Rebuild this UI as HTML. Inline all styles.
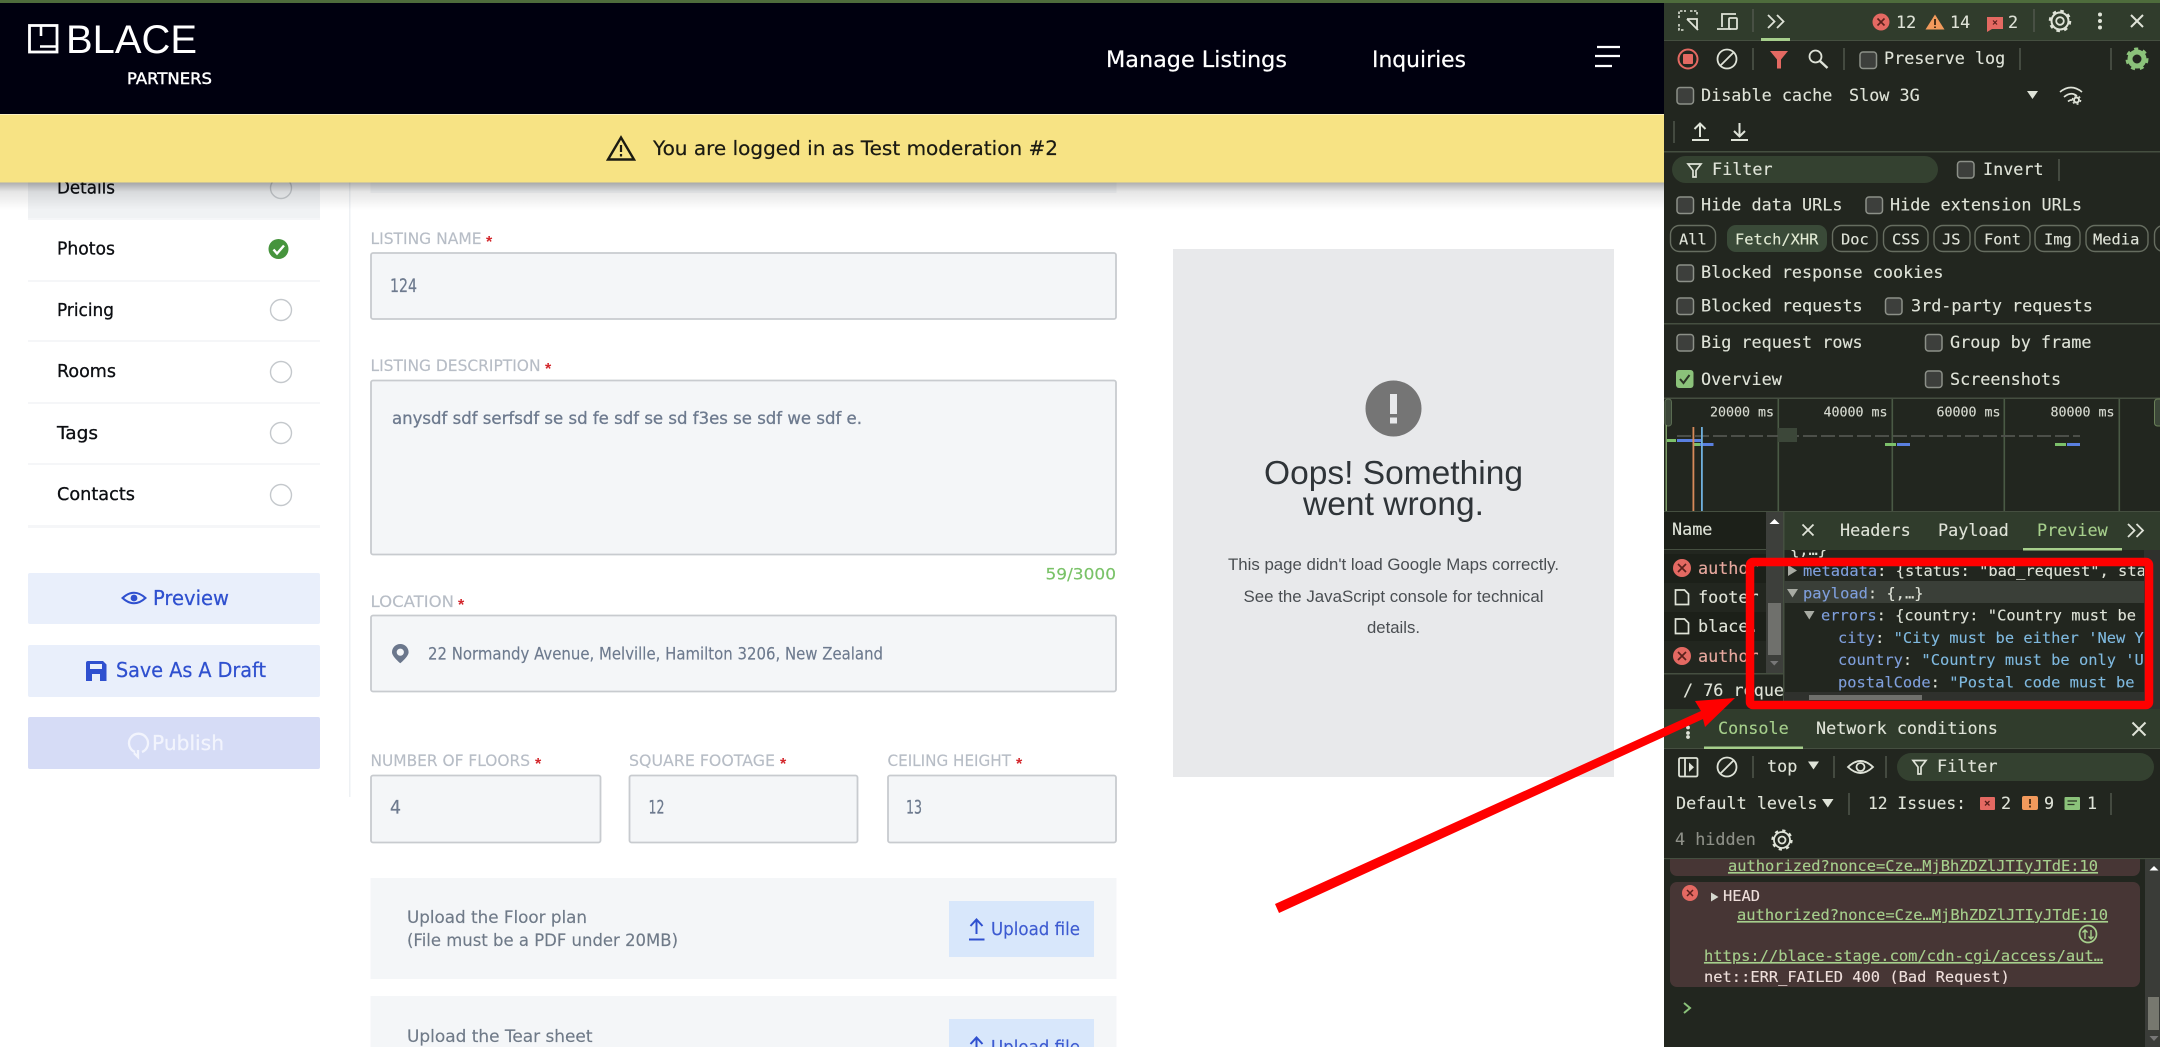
<!DOCTYPE html>
<html lang="en"><head><meta charset="utf-8"><title>BLACE Partners</title>
<style>
html,body{margin:0;padding:0;background:#fff;width:2160px;height:1047px;overflow:hidden}
svg{display:block;filter:blur(.35px)}
.p{font-family:"DejaVu Sans","Liberation Sans",sans-serif}
.a{font-family:"Liberation Sans",Arial,sans-serif}
.lbl{font-size:16px;fill:#b7bdc6;stroke:#b7bdc6;stroke-width:.15}
.val{font-size:19px;fill:#6d7a8e;stroke:#6d7a8e;stroke-width:.25}
.side{font-size:18px;fill:#0c0e12;stroke:#0c0e12;stroke-width:.3}
.star{font-size:16px;fill:#d3262b;font-family:"Liberation Sans",sans-serif;font-weight:bold}
.m{font-family:"DejaVu Sans Mono","Liberation Mono",monospace;font-size:16.8px;fill:#dfe3d8;stroke:#dfe3d8;stroke-width:.12}
.c{font-size:15.4px}
.t{font-size:13.3px;fill:#d5d8cf}
.k{fill:#7f9fdc;stroke:#7f9fdc}.s{fill:#7fb9df;stroke:#7fb9df}
.lk{fill:#a6cf8c;stroke:#a6cf8c;text-decoration:underline;font-size:15.4px}
.ic{fill:none;stroke:#dfe3d8;stroke-width:1.8}
.sep{stroke:#50564c;stroke-width:1.5}
.cb{fill:#3d3f3c;stroke:#8c9088;stroke-width:1.5}
.chip{fill:none;stroke:#666d60;stroke-width:1.4}
</style></head><body>
<svg width="2160" height="1047" viewBox="0 0 2160 1047" xmlns="http://www.w3.org/2000/svg">
<defs>
<linearGradient id="sh" x1="0" y1="0" x2="0" y2="1"><stop offset="0" stop-color="#000" stop-opacity=".33"/><stop offset=".35" stop-color="#000" stop-opacity=".1"/><stop offset="1" stop-color="#000" stop-opacity="0"/></linearGradient>
<clipPath id="cp"><rect x="1783" y="550" width="361" height="142"/></clipPath>
<clipPath id="cn"><rect x="1664" y="552" width="102" height="120"/></clipPath>
<clipPath id="cs"><rect x="1664" y="675" width="119" height="34"/></clipPath>
</defs>
<rect width="2160" height="1047" fill="#fff"/>

<!-- sidebar -->
<rect x="28" y="182" width="292" height="36" fill="#f0f2f4"/>
<g fill="#f5f6f8"><rect x="28" y="218" width="292" height="2"/><rect x="28" y="280" width="292" height="2"/><rect x="28" y="340" width="292" height="2"/><rect x="28" y="402" width="292" height="2"/><rect x="28" y="463" width="292" height="2"/><rect x="28" y="525" width="292" height="3"/></g>
<text class="p side" x="57" y="193.500" textLength="58" lengthAdjust="spacingAndGlyphs">Details</text>
<text class="p side" x="57" y="254.500" textLength="58" lengthAdjust="spacingAndGlyphs">Photos</text>
<text class="p side" x="57" y="316" textLength="57" lengthAdjust="spacingAndGlyphs">Pricing</text>
<text class="p side" x="57" y="377" textLength="59" lengthAdjust="spacingAndGlyphs">Rooms</text>
<text class="p side" x="57" y="439" textLength="41" lengthAdjust="spacingAndGlyphs">Tags</text>
<text class="p side" x="57" y="500" textLength="78" lengthAdjust="spacingAndGlyphs">Contacts</text>
<g fill="#fff" stroke="#c4c8cc" stroke-width="1.4">
<circle cx="281" cy="188" r="10.500" fill="none"/><circle cx="281" cy="310" r="10.500"/><circle cx="281" cy="372" r="10.500"/><circle cx="281" cy="433" r="10.500"/><circle cx="281" cy="495" r="10.500"/></g>
<circle cx="278.500" cy="249" r="10" fill="#46943d"/><path d="M273.500 249.500l3.500 4 7-8" fill="none" stroke="#fff" stroke-width="2.400"/>
<rect x="349" y="182" width="1.500" height="615" fill="#eef1f4"/>

<!-- sidebar buttons -->
<rect x="28" y="573" width="292" height="51" rx="2" fill="#e9effb"/>
<rect x="28" y="645" width="292" height="52" rx="2" fill="#e9effb"/>
<rect x="28" y="717" width="292" height="52" rx="2" fill="#d6dcf6"/>
<path d="M122.500 598q11.500-10.500 23 0q-11.500 10.500-23 0z" fill="none" stroke="#2f50cf" stroke-width="2"/><circle cx="134" cy="598" r="3.400" fill="#2f50cf"/>
<text class="p" x="153" y="605" font-size="20" fill="#2f50cf" stroke="#2f50cf" stroke-width=".25" textLength="76" lengthAdjust="spacingAndGlyphs">Preview</text>
<path d="M88 661h15l3.500 3.500v16.500h-20.500v-18q0-2 2-2z" fill="#2f50cf"/><rect x="90" y="664" width="12" height="5" fill="#e9effb"/><rect x="92" y="674" width="8" height="7" fill="#e9effb"/>
<text class="p" x="116" y="677" font-size="20" fill="#2f50cf" stroke="#2f50cf" stroke-width=".25" textLength="150" lengthAdjust="spacingAndGlyphs">Save As A Draft</text>
<path d="M135 752a9.500 9.500 0 1 1 7 0M138 750v7l-4-4" fill="none" stroke="#f2f4fd" stroke-width="2.300"/>
<text class="p" x="152" y="750" font-size="20" fill="#f2f4fd" stroke="#f2f4fd" stroke-width=".25" textLength="72" lengthAdjust="spacingAndGlyphs">Publish</text>

<!-- form -->
<rect x="370.500" y="182" width="746" height="11" fill="#f4f6f8"/>
<text class="p lbl" x="370.500" y="244" textLength="111" lengthAdjust="spacingAndGlyphs">LISTING NAME</text><text class="star" x="486" y="247">*</text>
<rect x="371" y="253" width="745" height="66" rx="2" fill="#f4f6f8" stroke="#c8cbcf" stroke-width="1.800"/>
<text class="p val" x="390" y="292" textLength="27" lengthAdjust="spacingAndGlyphs">124</text>

<text class="p lbl" x="370.500" y="371" textLength="170" lengthAdjust="spacingAndGlyphs">LISTING DESCRIPTION</text><text class="star" x="545" y="374">*</text>
<rect x="371" y="380.500" width="745" height="174" rx="2" fill="#f4f6f8" stroke="#c8cbcf" stroke-width="1.800"/>
<text class="p" x="392" y="424" font-size="17" fill="#6d7a8e" stroke="#6d7a8e" stroke-width=".3" textLength="470" lengthAdjust="spacingAndGlyphs">anysdf sdf serfsdf se sd fe sdf se sd f3es se sdf we sdf e.</text>
<text class="p" x="1045.500" y="579.500" font-size="16" fill="#79c267" stroke="#79c267" stroke-width=".15" textLength="70.500" lengthAdjust="spacingAndGlyphs">59/3000</text>

<text class="p lbl" x="370.500" y="607" textLength="83.500" lengthAdjust="spacingAndGlyphs">LOCATION</text><text class="star" x="458" y="610">*</text>
<rect x="371" y="615.500" width="745" height="76" rx="2" fill="#f4f6f8" stroke="#c8cbcf" stroke-width="1.800"/>
<path fill-rule="evenodd" d="M400.300 644c4.600 0 8.300 3.600 8.300 8.200 0 4.300-8.300 11-8.300 11s-8.300-6.700-8.300-11c0-4.600 3.700-8.200 8.300-8.200zm0 4.600a3.600 3.600 0 1 0 0 7.200 3.600 3.600 0 0 0 0-7.200z" fill="#6b778c"/>
<text class="p" x="428" y="659.500" font-size="16.500" fill="#6d7a8e" stroke="#6d7a8e" stroke-width=".15" textLength="455" lengthAdjust="spacingAndGlyphs">22 Normandy Avenue, Melville, Hamilton 3206, New Zealand</text>

<text class="p lbl" x="370.500" y="766" textLength="159.500" lengthAdjust="spacingAndGlyphs">NUMBER OF FLOORS</text><text class="star" x="535" y="769">*</text>
<text class="p lbl" x="629" y="766" textLength="146" lengthAdjust="spacingAndGlyphs">SQUARE FOOTAGE</text><text class="star" x="780" y="769">*</text>
<text class="p lbl" x="887.500" y="766" textLength="123.500" lengthAdjust="spacingAndGlyphs">CEILING HEIGHT</text><text class="star" x="1016" y="769">*</text>
<g fill="#f4f6f8" stroke="#c8cbcf" stroke-width="1.800"><rect x="371" y="775.500" width="229.500" height="67" rx="2"/><rect x="629.500" y="775.500" width="228" height="67" rx="2"/><rect x="888" y="775.500" width="228" height="67" rx="2"/></g>
<text class="p val" x="390" y="813.500" textLength="11" lengthAdjust="spacingAndGlyphs">4</text>
<text class="p val" x="648.500" y="813.500" textLength="16" lengthAdjust="spacingAndGlyphs">12</text>
<text class="p val" x="906" y="813.500" textLength="16" lengthAdjust="spacingAndGlyphs">13</text>

<rect x="370.500" y="878" width="746" height="101" fill="#f4f6f8"/>
<text class="p" x="407" y="923" font-size="17" fill="#6f7a88" stroke="#6f7a88" stroke-width=".15" textLength="180" lengthAdjust="spacingAndGlyphs">Upload the Floor plan</text>
<text class="p" x="407" y="946" font-size="17" fill="#6f7a88" stroke="#6f7a88" stroke-width=".15" textLength="271" lengthAdjust="spacingAndGlyphs">(File must be a PDF under 20MB)</text>
<rect x="949" y="901" width="145" height="56" fill="#d8e7fb"/>
<path d="M976.500 934v-14M970.500 926l6-6.500 6 6.500M969 939.500h15.500" fill="none" stroke="#2f50cf" stroke-width="2"/>
<text class="p" x="991" y="935" font-size="18" fill="#3d5bd1" stroke="#3d5bd1" stroke-width=".15" textLength="89" lengthAdjust="spacingAndGlyphs">Upload file</text>

<rect x="370.500" y="996" width="746" height="51" fill="#f4f6f8"/>
<text class="p" x="407" y="1042" font-size="17" fill="#6f7a88" stroke="#6f7a88" stroke-width=".15" textLength="185.500" lengthAdjust="spacingAndGlyphs">Upload the Tear sheet</text>
<rect x="949" y="1019" width="145" height="28" fill="#d8e7fb"/>
<path d="M976.500 1052v-14M970.500 1044l6-6.500 6 6.500" fill="none" stroke="#2f50cf" stroke-width="2"/>
<text class="p" x="991" y="1053" font-size="18" fill="#3d5bd1" stroke="#3d5bd1" stroke-width=".15" textLength="89" lengthAdjust="spacingAndGlyphs">Upload file</text>

<!-- map -->
<rect x="1173" y="249" width="441" height="528" fill="#e8e9eb"/>
<circle cx="1393.500" cy="408.500" r="28" fill="#757575"/>
<rect x="1390" y="394" width="7" height="20" fill="#e8e9eb"/><rect x="1390" y="417.500" width="7" height="6" fill="#e8e9eb"/>
<g class="a" text-anchor="middle">
<text x="1393.500" y="484" font-size="33.500" fill="#2f3438" textLength="259" lengthAdjust="spacingAndGlyphs">Oops! Something</text>
<text x="1393.500" y="515" font-size="33.500" fill="#2f3438" textLength="181" lengthAdjust="spacingAndGlyphs">went wrong.</text>
<text x="1393.500" y="570" font-size="16.500" fill="#4a4e52" textLength="331" lengthAdjust="spacingAndGlyphs">This page didn't load Google Maps correctly.</text>
<text x="1393.500" y="602" font-size="16.500" fill="#4a4e52" textLength="300" lengthAdjust="spacingAndGlyphs">See the JavaScript console for technical</text>
<text x="1393.500" y="633" font-size="16.500" fill="#4a4e52" textLength="53" lengthAdjust="spacingAndGlyphs">details.</text>
</g>

<!-- shadow + banner + header -->
<rect x="0" y="182" width="1664" height="28" fill="url(#sh)"/>
<rect x="0" y="3" width="1664" height="111" fill="#00000f"/>
<rect x="0" y="114.500" width="1664" height="68" fill="#f7e384"/>
<rect x="0" y="0" width="2160" height="3" fill="#4e6c3c"/>
<rect x="29.500" y="25.500" width="27.500" height="26.500" fill="none" stroke="#fff" stroke-width="2.800"/>
<path d="M41 25v11M40 46.500h17" stroke="#fff" stroke-width="2.600" fill="none"/>
<text class="a" x="66" y="53" font-size="40" fill="#fff" textLength="131" lengthAdjust="spacingAndGlyphs">BLACE</text>
<text class="p" x="127" y="84" font-size="16" fill="#fff" stroke="#fff" stroke-width=".45" textLength="85" lengthAdjust="spacingAndGlyphs">PARTNERS</text>
<text class="p" x="1106" y="67" font-size="22" fill="#fff" stroke="#fff" stroke-width=".2" textLength="181" lengthAdjust="spacingAndGlyphs">Manage Listings</text>
<text class="p" x="1372" y="67" font-size="22" fill="#fff" stroke="#fff" stroke-width=".2" textLength="94" lengthAdjust="spacingAndGlyphs">Inquiries</text>
<path d="M1597 47h23M1595 56h25M1595 66h17" stroke="#fff" stroke-width="2.200" fill="none"/>
<path d="M621 137.500l13 22h-26z" fill="none" stroke="#1c1b12" stroke-width="2.400" stroke-linejoin="miter"/><path d="M621 145v7M621 154v2.500" stroke="#1c1b12" stroke-width="2.200"/>
<text class="p" x="653" y="155" font-size="19.500" fill="#1a1a12" stroke="#1a1a12" stroke-width=".2" textLength="405" lengthAdjust="spacingAndGlyphs">You are logged in as Test moderation #2</text>

<!-- DEVTOOLS -->
<rect x="1664" y="3" width="496" height="1044" fill="#22261f"/>
<rect x="1664" y="3" width="496" height="37" fill="#303c2c"/>
<rect x="1664" y="40" width="496" height="1" fill="#454f40"/>
<path d="M1679 18v-7h7M1690 11h7v5M1679 24v6h6" fill="none" stroke="#dfe3d8" stroke-width="1.600" stroke-dasharray="2.500 1.500"/>
<path d="M1687 19h10v10M1687 19l11 11" class="ic"/>
<path d="M1722 27V14h14M1717 29h14" class="ic"/><rect x="1729" y="18" width="8" height="11" rx="1" class="ic"/>
<line x1="1753" y1="9" x2="1753" y2="32" class="sep"/>
<path d="M1768 15l6.500 6.500-6.500 6.500M1777 15l6.500 6.500-6.500 6.500" class="ic"/>
<rect x="1761" y="38" width="29" height="3" fill="#a6cf8c"/>
<circle cx="1881" cy="22" r="8.500" fill="#e46962"/><path d="M1877.500 18.500l7 7M1884.500 18.500l-7 7" stroke="#5a201c" stroke-width="1.600"/>
<text class="m" x="1896" y="28">12</text>
<path d="M1935 14.500l9.500 15h-19z" fill="#f29a5c"/><path d="M1935 19v6M1935 26.500v1.500" stroke="#3a2410" stroke-width="1.800"/>
<text class="m" x="1950" y="28">14</text>
<path d="M1987 17h16v12h-11l-5 3z" fill="#e46962"/><path d="M1993 20.500l4 4M1997 20.500l-4 4" stroke="#5a201c" stroke-width="1.200"/>
<text class="m" x="2008" y="28">2</text>
<line x1="2034" y1="9" x2="2034" y2="32" class="sep"/>
<circle cx="2060" cy="21" r="3.800" class="ic"/><circle cx="2060" cy="21" r="8.500" fill="none" stroke="#dfe3d8" stroke-width="2"/><circle cx="2060" cy="21" r="10" fill="none" stroke="#dfe3d8" stroke-width="2.500" stroke-dasharray="3.500 4.350"/>
<g fill="#dfe3d8"><circle cx="2100" cy="14.500" r="2"/><circle cx="2100" cy="21" r="2"/><circle cx="2100" cy="27.500" r="2"/></g>
<path d="M2131 15l12 12M2143 15l-12 12" stroke="#dfe3d8" stroke-width="2" fill="none"/>

<circle cx="1688" cy="59" r="9.500" fill="none" stroke="#e46962" stroke-width="2"/><rect x="1683" y="54" width="10" height="10" rx="1" fill="#e46962"/>
<circle cx="1727" cy="59" r="9.500" class="ic"/><path d="M1733.500 52.500l-13 13" class="ic"/>
<line x1="1753" y1="48" x2="1753" y2="70" class="sep"/>
<path d="M1770 51h18l-7 8.500v9h-4v-9z" fill="#e46962"/>
<circle cx="1815.500" cy="56.500" r="6" class="ic"/><path d="M1820 61l7.500 7" fill="none" stroke="#dfe3d8" stroke-width="2.400"/>
<line x1="1844" y1="48" x2="1844" y2="70" class="sep"/>
<rect x="1860" y="52" width="16.500" height="16.500" rx="3" class="cb"/>
<text class="m" x="1884" y="64">Preserve log</text>
<line x1="2020" y1="48" x2="2020" y2="70" class="sep"/><line x1="2111" y1="48" x2="2111" y2="70" class="sep"/>
<circle cx="2137" cy="59" r="7" fill="none" stroke="#8bc27a" stroke-width="5"/><circle cx="2137" cy="59" r="10" fill="none" stroke="#8bc27a" stroke-width="3" stroke-dasharray="4 4.800"/>

<rect x="1677" y="87.500" width="16.500" height="16.500" rx="3" class="cb"/>
<text class="m" x="1701" y="101">Disable cache</text><text class="m" x="1849" y="101">Slow 3G</text>
<path d="M2027 91h11l-5.500 8z" fill="#dfe3d8"/>
<path d="M2060 92q11-9 22 0M2064 97q7-6 13-1M2068 101.500q3-2.500 4.500-1" fill="none" stroke="#dfe3d8" stroke-width="1.700"/><circle cx="2076.500" cy="100" r="2.500" fill="none" stroke="#dfe3d8" stroke-width="2"/><circle cx="2076.500" cy="100" r="4.200" fill="none" stroke="#dfe3d8" stroke-width="1.300" stroke-dasharray="2 2.400"/>

<line x1="1674" y1="121" x2="1674" y2="143" class="sep"/>
<path d="M1700 137v-13M1694.500 129l5.500-5.500 5.500 5.500M1692 140h17" fill="none" stroke="#dfe3d8" stroke-width="2"/>
<path d="M1739.500 123v13M1734 131l5.500 5.500 5.500-5.500M1731 140h17" fill="none" stroke="#dfe3d8" stroke-width="2"/>
<rect x="1664" y="151" width="496" height="1.500" fill="#454f40"/>

<rect x="1672" y="156" width="266" height="27" rx="13.500" fill="#344130"/>
<path d="M1688 164h13l-5 6.500v6.500h-3v-6.500z" fill="none" stroke="#dfe3d8" stroke-width="1.700"/>
<text class="m" x="1712" y="175">Filter</text>
<rect x="1957.500" y="161.500" width="16.500" height="16.500" rx="3" class="cb"/>
<text class="m" x="1983" y="175">Invert</text>
<line x1="2059" y1="159" x2="2059" y2="181" class="sep"/>

<rect x="1677" y="197" width="16.500" height="16.500" rx="3" class="cb"/>
<text class="m" x="1701" y="210.500">Hide data URLs</text>
<rect x="1866" y="197" width="16.500" height="16.500" rx="3" class="cb"/>
<text class="m" x="1890" y="210.500">Hide extension URLs</text>

<g class="chip"><rect x="1670.500" y="225.500" width="45" height="26" rx="9"/><rect x="1832.500" y="225.500" width="44.500" height="26" rx="9"/><rect x="1883.500" y="225.500" width="44.500" height="26" rx="9"/><rect x="1934" y="225.500" width="36" height="26" rx="9"/><rect x="1975" y="225.500" width="55" height="26" rx="9"/><rect x="2035" y="225.500" width="45" height="26" rx="9"/><rect x="2086" y="225.500" width="62" height="26" rx="9"/><rect x="2154.500" y="225.500" width="20" height="26" rx="9"/></g>
<rect x="1727" y="225" width="100" height="27" rx="9" fill="#3a4a38"/>
<text class="m c" x="1679" y="244.500">All</text><text class="m c" x="1735" y="244.500" style="fill:#e3ecd4">Fetch/XHR</text><text class="m c" x="1841" y="244.500">Doc</text><text class="m c" x="1892" y="244.500">CSS</text><text class="m c" x="1942" y="244.500">JS</text><text class="m c" x="1984" y="244.500">Font</text><text class="m c" x="2044" y="244.500">Img</text><text class="m c" x="2093" y="244.500">Media</text>

<rect x="1677" y="265" width="16.500" height="16.500" rx="3" class="cb"/>
<text class="m" x="1701" y="278">Blocked response cookies</text>
<rect x="1677" y="298" width="16.500" height="16.500" rx="3" class="cb"/>
<text class="m" x="1701" y="311.500">Blocked requests</text>
<rect x="1885.500" y="298" width="16.500" height="16.500" rx="3" class="cb"/>
<text class="m" x="1911" y="311.500">3rd-party requests</text>
<rect x="1664" y="323" width="496" height="1.500" fill="#454f40"/>
<rect x="1677" y="334.500" width="16.500" height="16.500" rx="3" class="cb"/>
<text class="m" x="1701" y="348">Big request rows</text>
<rect x="1925.500" y="334.500" width="16.500" height="16.500" rx="3" class="cb"/>
<text class="m" x="1950" y="348">Group by frame</text>
<rect x="1676" y="370" width="17.500" height="18" rx="3" fill="#8bc27a"/><path d="M1680 379l3.500 4 6-8" fill="none" stroke="#2b3425" stroke-width="2"/>
<text class="m" x="1701" y="385">Overview</text>
<rect x="1925.500" y="371" width="16.500" height="16.500" rx="3" class="cb"/>
<text class="m" x="1950" y="385">Screenshots</text>
<rect x="1664" y="397.500" width="496" height="1.500" fill="#454f40"/>

<!-- overview -->
<g fill="#4a5a45"><rect x="1777.500" y="399" width="1.600" height="112"/><rect x="1891.500" y="399" width="1.600" height="112"/><rect x="2003.500" y="399" width="1.600" height="112"/><rect x="2118.500" y="399" width="1.600" height="112"/></g>
<text class="m t" x="1710" y="416.500">20000 ms</text><text class="m t" x="1823.500" y="416.500">40000 ms</text><text class="m t" x="1936.500" y="416.500">60000 ms</text><text class="m t" x="2050.500" y="416.500">80000 ms</text>
<path d="M1677 436h403" stroke="#4c4f49" stroke-width="2" stroke-dasharray="14 4" fill="none"/>
<rect x="1778" y="428" width="19" height="14" fill="#3c4739"/>
<rect x="1665" y="399" width="6.500" height="27" rx="3" fill="#3c4739" stroke="#5a6c52" stroke-width="1"/><rect x="1665.500" y="425" width="1.500" height="86" fill="#7b9a66"/>
<rect x="2154.500" y="399" width="8" height="27" rx="3" fill="#3c4739" stroke="#6a8058" stroke-width="1"/>
<g fill="#7cc06a"><rect x="1667" y="439" width="9" height="3"/><rect x="1694" y="443" width="6" height="3"/><rect x="1885" y="443" width="11" height="3"/><rect x="2055" y="443" width="11" height="3"/></g>
<g fill="#5a80e0"><rect x="1677" y="439" width="25" height="3"/><rect x="1700" y="443" width="13.500" height="3"/><rect x="1897" y="443" width="13" height="3"/><rect x="2067" y="443" width="13" height="3"/></g>
<rect x="1692.500" y="427" width="1.800" height="84" fill="#d7895a"/><rect x="1701" y="427" width="1.800" height="84" fill="#6fb0dd"/>
<rect x="1664" y="511" width="496" height="1.500" fill="#454f40"/>

<!-- network table -->
<rect x="1664" y="512" width="102" height="38" fill="#1c2019"/>
<rect x="1664" y="549" width="102" height="1" fill="#454f40"/>
<text class="m" x="1672" y="535">Name</text>
<rect x="1766" y="512" width="17" height="161" fill="#3d3f3b"/>
<path d="M1769.500 524l5-5 5 5z" fill="#fff"/>
<rect x="1768" y="603" width="13" height="52" fill="#6f706c"/>
<path d="M1770 661h8.500l-4.200 4.500z" fill="#777"/>
<rect x="1664" y="554" width="102" height="29" fill="#1c2019"/><rect x="1664" y="612" width="102" height="29" fill="#1c2019"/>
<g clip-path="url(#cn)">
<circle cx="1682" cy="568" r="9" fill="#e46962"/><path d="M1678 564l8 8M1686 564l-8 8" stroke="#5a201c" stroke-width="1.700"/>
<text class="m" x="1698" y="574" style="fill:#e8a99f;stroke:#e8a99f">author</text>
<path d="M1675.500 590h9l4 4v10.500h-13z" fill="none" stroke="#dfe3d8" stroke-width="1.700"/>
<text class="m" x="1698" y="603">footer</text>
<path d="M1675.500 619h9l4 4v10.500h-13z" fill="none" stroke="#dfe3d8" stroke-width="1.700"/>
<text class="m" x="1698" y="632">blace.</text>
<circle cx="1682" cy="656" r="9" fill="#e46962"/><path d="M1678 652l8 8M1686 652l-8 8" stroke="#5a201c" stroke-width="1.700"/>
<text class="m" x="1698" y="662" style="fill:#e8a99f;stroke:#e8a99f">author</text>
</g>
<rect x="1664" y="673" width="119" height="1.500" fill="#454f40"/>
<text class="m" clip-path="url(#cs)" x="1683" y="696">/ 76 requests</text>

<!-- preview pane -->
<rect x="1783" y="512" width="377" height="38" fill="#303c2c"/>
<rect x="1783" y="512" width="1.500" height="197" fill="#454f40"/>
<path d="M1802.500 524.500l11 11M1813.500 524.500l-11 11" stroke="#dfe3d8" stroke-width="1.800" fill="none"/>
<text class="m" x="1840" y="536">Headers</text><text class="m" x="1938" y="536">Payload</text><text class="m" x="2037" y="536" style="fill:#a6cf8c;stroke:#a6cf8c">Preview</text>
<rect x="2023" y="548" width="99" height="2.500" fill="#a6cf8c"/>
<path d="M2128 524l6.500 6.500-6.500 6.500M2136.500 524l6.500 6.500-6.500 6.500" class="ic"/>
<rect x="1784" y="581" width="360" height="22" fill="#3a3f38"/>
<rect x="2144" y="550" width="16" height="159" fill="#2f312d"/>
<rect x="1784" y="692" width="360" height="10" fill="#2f312d"/><rect x="1809" y="695" width="113" height="5" fill="#6f706c"/>
<g clip-path="url(#cp)">
<text class="m c" x="1790" y="555">{,…}</text>
<path d="M1788 565l9 5.500-9 5.500z" fill="#a8aba3"/>
<text class="m c" x="1803" y="576"><tspan class="k">metadata</tspan>: {status: "bad_request", statusCode: 400}</text>
<path d="M1787 589h11l-5.500 8.500z" fill="#a8aba3"/>
<text class="m c" x="1803" y="598.500"><tspan class="k">payload</tspan>: {,…}</text>
<path d="M1804 611h10.500l-5.200 8.500z" fill="#a8aba3"/>
<text class="m c" x="1821" y="620.500"><tspan class="k">errors</tspan>: {country: "Country must be only</text>
<text class="m c" x="1838" y="643"><tspan class="k">city</tspan>: <tspan class="s">"City must be either 'New York'</tspan></text>
<text class="m c" x="1838" y="665"><tspan class="k">country</tspan>: <tspan class="s">"Country must be only 'US'"</tspan></text>
<text class="m c" x="1838" y="687.500"><tspan class="k">postalCode</tspan>: <tspan class="s">"Postal code must be valid"</tspan></text>
</g>

<!-- console drawer -->
<rect x="1664" y="709" width="496" height="39" fill="#303c2c"/>
<rect x="1664" y="748" width="496" height="1" fill="#454f40"/>
<g fill="#dfe3d8"><circle cx="1688" cy="727.500" r="1.900"/><circle cx="1688" cy="733" r="1.900"/><circle cx="1688" cy="737" r="1.900"/></g>
<text class="m" x="1718" y="734" style="fill:#a6cf8c;stroke:#a6cf8c">Console</text>
<text class="m" x="1816" y="734">Network conditions</text>
<rect x="1704" y="746.500" width="99" height="2.500" fill="#a6cf8c"/>
<path d="M2132.500 722.500l13 13M2145.500 722.500l-13 13" stroke="#dfe3d8" stroke-width="2" fill="none"/>

<rect x="1679" y="758" width="18.500" height="18.500" rx="1.500" class="ic"/><path d="M1685 758v18.500" class="ic"/><path d="M1689 762.500l5 4.700-5 4.700z" fill="#dfe3d8"/>
<circle cx="1727" cy="767" r="9.500" class="ic"/><path d="M1733.500 760.500l-13 13" class="ic"/>
<line x1="1753" y1="756" x2="1753" y2="778" class="sep"/>
<text class="m" x="1767" y="772">top</text>
<path d="M1808 761.500h11l-5.500 8z" fill="#dfe3d8"/>
<line x1="1834" y1="756" x2="1834" y2="778" class="sep"/>
<path d="M1848 767q12.500-12 25 0q-12.500 12-25 0z" class="ic"/><circle cx="1860.500" cy="767" r="4" class="ic"/>
<line x1="1886" y1="756" x2="1886" y2="778" class="sep"/>
<rect x="1897" y="753" width="257" height="28" rx="14" fill="#344130"/>
<path d="M1913 760.500h13l-5 6.500v7h-3v-7z" fill="none" stroke="#dfe3d8" stroke-width="1.700"/>
<text class="m" x="1937" y="772">Filter</text>

<text class="m" x="1676" y="809">Default levels</text>
<path d="M1822 799h11.500l-5.700 8.500z" fill="#dfe3d8"/>
<line x1="1849" y1="793" x2="1849" y2="815" class="sep"/>
<text class="m" x="1868" y="809" textLength="98" lengthAdjust="spacingAndGlyphs">12 Issues:</text>
<rect x="1980" y="797" width="15" height="13" rx="1" fill="#e46962"/><path d="M1985 801l4.500 4.500M1989.500 801l-4.500 4.500" stroke="#5a201c" stroke-width="1.300"/>
<text class="m" x="2001" y="809">2</text>
<rect x="2022" y="796" width="16" height="14" rx="2" fill="#f29a5c"/><path d="M2030 799v5M2030 805.500v2" stroke="#3a2410" stroke-width="1.700"/>
<text class="m" x="2044" y="809">9</text>
<rect x="2064.500" y="797" width="15.500" height="13" rx="1" fill="#8bc27a"/><path d="M2067.500 801h9.500M2067.500 804.500h7" stroke="#2b3425" stroke-width="1.300"/>
<text class="m" x="2087" y="809">1</text>
<line x1="2111" y1="793" x2="2111" y2="815" class="sep"/>
<text class="m" x="1675" y="845" style="fill:#8e9088;stroke:#8e9088">4 hidden</text>
<circle cx="1782" cy="840" r="3.500" class="ic"/><circle cx="1782" cy="840" r="8" fill="none" stroke="#dfe3d8" stroke-width="1.800"/><circle cx="1782" cy="840" r="9.500" fill="none" stroke="#dfe3d8" stroke-width="2.300" stroke-dasharray="3.200 4.250"/>
<rect x="1664" y="858" width="496" height="1.200" fill="#454f40"/>

<path d="M1670 859h470v10a7 7 0 0 1-7 7h-456a7 7 0 0 1-7-7z" fill="#473635"/>
<text class="m lk" x="1728" y="871" textLength="370" lengthAdjust="spacingAndGlyphs">authorized?nonce=Cze…MjBhZDZlJTIyJTdE:10</text>
<rect x="1670" y="882" width="470" height="105" rx="7" fill="#473635"/>
<circle cx="1690" cy="893" r="8" fill="#e46962"/><path d="M1687 890l6 6M1693 890l-6 6" stroke="#5a201c" stroke-width="1.500"/>
<path d="M1711 892.500l7.500 4.500-7.500 4.500z" fill="#d5d8cf"/>
<text class="m c" x="1723" y="901" style="fill:#eedfdb;stroke:#eedfdb">HEAD</text>
<text class="m lk" x="1737" y="920" textLength="371" lengthAdjust="spacingAndGlyphs">authorized?nonce=Cze…MjBhZDZlJTIyJTdE:10</text>
<circle cx="2088" cy="934" r="8.500" fill="none" stroke="#a6cf8c" stroke-width="1.700"/><path d="M2085 939v-9M2082.500 932.500l2.500-2.500 2.500 2.500M2091 930v9M2088.500 936.500l2.500 2.500 2.500-2.500" fill="none" stroke="#a6cf8c" stroke-width="1.400"/>
<text class="m lk" x="1704" y="961" textLength="399" lengthAdjust="spacingAndGlyphs">https://blace-stage.com/cdn-cgi/access/aut…</text>
<text class="m c" x="1704" y="982" style="fill:#eedfdb;stroke:#eedfdb">net::ERR_FAILED 400 (Bad Request)</text>
<path d="M1684 1003l6 5-6 5" fill="none" stroke="#8bc27a" stroke-width="2"/>
<rect x="2145" y="859" width="15" height="188" fill="#3a3c38"/>
<path d="M2149.500 870.500l4.500-4.500 4.500 4.500z" fill="#fff"/>
<rect x="2148" y="997" width="11" height="33" fill="#77786f"/>
<path d="M2149.500 1036h9l-4.500 5z" fill="#777"/>

<!-- annotation -->
<rect x="1750" y="562" width="399" height="143" rx="3" fill="none" stroke="#f00" stroke-width="8.500"/>
<polygon points="1275,904 1701,711 1695,701 1735,698 1705,727 1703,719 1279,913" fill="#f00"/>
</svg>
</body></html>
